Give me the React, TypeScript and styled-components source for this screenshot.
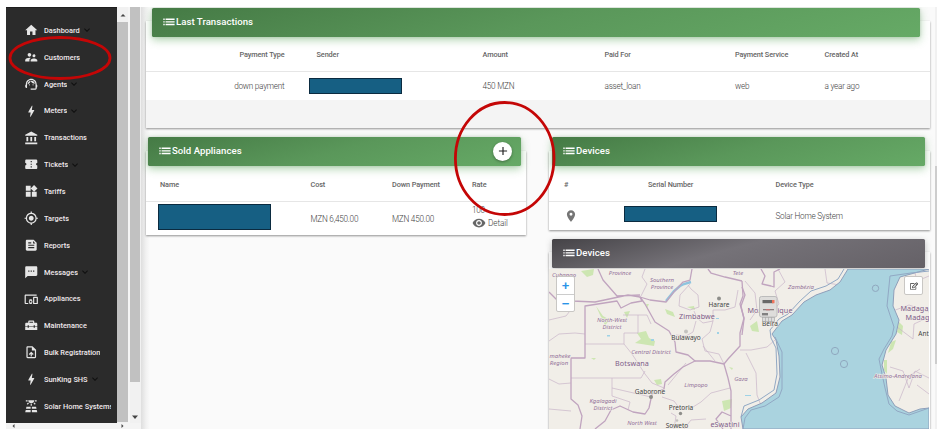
import React from "react";
import styled, { createGlobalStyle } from "styled-components";
import type { IconType } from "react-icons";
import {
  MdHome, MdSupervisorAccount, MdSupportAgent, MdBolt, MdAccountBalance, MdConfirmationNumber,
  MdWidgets, MdGpsFixed, MdFeed, MdTextsms, MdDevicesOther, MdHomeRepairService, MdUploadFile,
  MdSolarPower, MdAdd, MdRemoveRedEye, MdLocationOn, MdKeyboardArrowDown,
} from "react-icons/md";
import { FaRegEdit } from "react-icons/fa";

const GlobalStyle = createGlobalStyle`
  * { box-sizing: border-box; }
  body { margin: 0; background: #fff; font-family: Roboto, "Liberation Sans", sans-serif; }
`;

const Page = styled.div`
  position: relative;
  width: 945px;
  height: 442px;
  padding: 7px 8px 13px 6px;
  overflow: hidden;
  background: #fff;
`;

const Screen = styled.div`
  display: flex;
  height: 422px;
  background: #fafafa;
`;

const SidePane = styled.aside`
  display: flex;
  flex-direction: column;
  width: 135px;
  flex: none;
  background: #f5f5f5;
`;

const SideTop = styled.div`
  display: flex;
  height: 416px;
`;

const Nav = styled.nav`
  width: 111px;
  height: 416px;
  padding-top: 9px;
  background: #2b2b2b;
  border-top: 1px solid #1e1e1e;
  overflow: hidden;
`;

const NavItem = styled.a`
  display: flex;
  align-items: center;
  height: 26.85px;
  padding-left: 17.5px;
  color: #f0e9eb;
  font-size: 7.4px;
  font-weight: 500;
  white-space: nowrap;
`;

const NavLabel = styled.span`
  max-width: 67px;
  overflow: hidden;
`;

const NavIcon = styled.span`
  display: flex;
  width: 20.5px;
  flex: none;
  color: #e6e6e6;
  font-size: 14.5px;
`;

const NavArrow = styled.span`
  display: flex;
  margin-left: 1px;
  color: #101010;
  font-size: 12px;
`;

const InnerScroll = styled.div`
  display: flex;
  flex-direction: column;
  width: 11px;
  margin-right: 2px;
  background: #f1f1f1;
`;

const OuterScroll = styled(InnerScroll)`
  justify-content: space-between;
  width: 11px;
  margin-right: 0;
  padding-right: 1px;
`;

const Thumb = styled.div<{ $height: number }>`
  height: ${(p) => p.$height}px;
  flex: none;
  background: #c1c1c1;
`;

const ScrollButton = styled.div<{ $height: number }>`
  display: flex;
  flex: none;
  align-items: center;
  justify-content: center;
  height: ${(p) => p.$height}px;
`;

const HorizontalScroll = styled.div`
  display: flex;
  justify-content: space-between;
  align-items: center;
  height: 6px;
  padding: 0 15px 0 4px;
  background: #f4f4f4;
`;

const Main = styled.main`
  width: 794px;
  flex: none;
  padding: 14px 0 0 5px;
  background: linear-gradient(90deg, #dedede, #f1f1f1 5px, #fafafa 9px);
  overflow: hidden;
`;

const Card = styled.section<{ $height: number }>`
  height: ${(p) => p.$height}px;
  background: #fff;
  box-shadow: 0 1px 2px rgba(0, 0, 0, 0.42);
`;

const TransactionsCard = styled(Card)`
  width: 784px;
  background: linear-gradient(#fff 79px, #f4f4f4 79px);
`;

const CardHeader = styled.header<{ $tone?: "green" | "gray"; $left: number; $right: number; $rise: number }>`
  position: relative;
  top: -${(p) => p.$rise}px;
  display: flex;
  align-items: center;
  height: 29px;
  margin: 0 ${(p) => p.$right}px -${(p) => p.$rise}px ${(p) => p.$left}px;
  padding: 0 9px 1px 11px;
  border-radius: 1.5px;
  color: #fff;
  font-size: 9.6px;
  font-weight: 500;
  background: ${(p) =>
    p.$tone === "gray"
      ? "linear-gradient(165deg, #454347, #757278 45%, #656167)"
      : "linear-gradient(165deg, #457a45, #5a975a 50%, #66aa66)"};
  box-shadow: ${(p) =>
    p.$tone === "gray"
      ? "0 2px 6px rgba(70, 70, 70, 0.35)"
      : "0 3px 8px rgba(80, 160, 80, 0.45), 0 0 3px rgba(0, 0, 0, 0.15)"};
`;

const HeaderTitle = styled.span`
  flex: 1;
  padding-bottom: 1px;
  white-space: nowrap;
  letter-spacing: 0.04px;
`;

const ListGlyph = styled.span`
  display: flex;
  width: 13px;
`;

const AddButton = styled.button`
  display: flex;
  align-items: center;
  justify-content: center;
  width: 19px;
  height: 19px;
  padding: 0;
  border: 0;
  border-radius: 50%;
  background: #fff;
  color: #222;
  font-size: 14px;
  box-shadow: 0 1px 3px rgba(0, 0, 0, 0.35);
`;

const TableRow = styled.div<{ $columns: string; $height: number; $left?: number }>`
  display: grid;
  grid-template-columns: ${(p) => p.$columns};
  align-items: center;
  height: ${(p) => p.$height}px;
  padding-left: ${(p) => p.$left ?? 0}px;
  background: #fff;
  color: #424242;
  font-size: 8.2px;
  font-weight: 300;
  letter-spacing: -0.24px;
  white-space: nowrap;
`;

const TableHead = styled(TableRow)`
  padding-top: 1px;
  color: #666;
  font-size: 7.3px;
  font-weight: 500;
  letter-spacing: -0.1px;
  border-bottom: 1px solid #e6e6e6;
`;

const EndCell = styled.span`
  padding-right: 32px;
  text-align: right;
`;

const Redacted = styled.span<{ $width: number; $height: number; $shift: number; $lift: number }>`
  width: ${(p) => p.$width}px;
  height: ${(p) => p.$height}px;
  margin-left: ${(p) => p.$shift}px;
  margin-bottom: ${(p) => p.$lift}px;
  border: 1px solid #0b2b40;
  background: #165f83;
`;

const RateCell = styled.div`
  display: flex;
  flex-direction: column;
  margin-top: -3px;
  line-height: 12px;
`;

const DetailLink = styled.span`
  display: flex;
  align-items: center;
  gap: 2px;
  letter-spacing: -0.1px;
`;

const DetailIcon = styled.span`
  display: flex;
  color: #666;
  font-size: 14px;
`;

const PinIcon = styled(DetailIcon)`
  color: #757575;
`;

const LowerArea = styled.div`
  display: grid;
  grid-template-columns: 380px 381px;
  column-gap: 23px;
  align-items: start;
  margin-top: 23px;
`;

const RightColumn = styled.div`
  display: flex;
  flex-direction: column;
  gap: 22px;
`;

const MapFrame = styled.div`
  position: relative;
  width: 380px;
  height: 160px;
  margin-top: 1px;
  overflow: hidden;
  font-family: "Noto Sans", sans-serif;
`;

const ZoomControl = styled.div`
  position: absolute;
  left: 7px;
  top: 7px;
  width: 19px;
  border: 1px solid #c9c7c4;
  border-radius: 2px;
  background: #fff;
`;

const ZoomButton = styled.div`
  display: flex;
  align-items: center;
  justify-content: center;
  height: 17px;
  color: #2a93e8;
  font: 700 13px/17px "Liberation Sans", sans-serif;
  & + & { border-top: 1px solid #ccc; }
`;

const EditControl = styled.div`
  position: absolute;
  right: 6px;
  top: 7px;
  display: flex;
  align-items: center;
  justify-content: center;
  width: 19px;
  height: 19px;
  border: 1px solid #c9c7c4;
  border-radius: 2px;
  background: #fff;
  color: #333;
  font-size: 8px;
`;

const PageScroll = styled.div`
  width: 2px;
  padding-top: 29px;
  background: #f1f1f1;
`;

const PageThumb = styled.div`
  height: 328px;
  background: linear-gradient(#f1f1f1 130px, #cdcdcd 130px);
`;

const Annotations = styled.svg`
  position: absolute;
  left: 0;
  top: 0;
  pointer-events: none;
`;

const navItems: { label: string; icon: IconType; open?: boolean }[] = [
  { label: "Dashboard", icon: MdHome, open: true },
  { label: "Customers", icon: MdSupervisorAccount },
  { label: "Agents", icon: MdSupportAgent, open: true },
  { label: "Meters", icon: MdBolt, open: true },
  { label: "Transactions", icon: MdAccountBalance },
  { label: "Tickets", icon: MdConfirmationNumber, open: true },
  { label: "Tariffs", icon: MdWidgets },
  { label: "Targets", icon: MdGpsFixed },
  { label: "Reports", icon: MdFeed },
  { label: "Messages", icon: MdTextsms, open: true },
  { label: "Appliances", icon: MdDevicesOther },
  { label: "Maintenance", icon: MdHomeRepairService },
  { label: "Bulk Registration", icon: MdUploadFile },
  { label: "SunKing SHS", icon: MdBolt, open: true },
  { label: "Solar Home Systems", icon: MdSolarPower },
];

const TX_COLUMNS = "170.5px 166px 122px 130.5px 89.5px 1fr";
const SOLD_COLUMNS = "150.5px 81.5px 80px 1fr";
const DEVICE_COLUMNS = "84px 127.5px 1fr";

const Arrow = ({ d }: { d: string }) => (
  <svg width="6" height="6" viewBox="0 0 6 6"><path d={d} fill="#444" /></svg>
);

const ListIcon = () => (
  <svg width="12" height="8" viewBox="0 0 12 8" fill="#fff">
    <path d="M0.3 0.6h1.4v1.4H0.3zM0.3 3.2h1.4v1.4H0.3zM0.3 5.8h1.4v1.4H0.3zM2.6 0.6h9v1.4h-9zM2.6 3.2h9v1.4h-9zM2.6 5.8h9v1.4h-9z" />
  </svg>
);

/* Southern Africa; the map's own coordinates start at 549, 269. */
const borders = [
  "M598 269 L603 280 L617 296 L640 295 M549 292 L556 299 L572 301 L595 302 L628 295 L640 297 L642 301 L631 303 L621 308 L617 301 L585 306 L585 358 L571 358 L571 399 L578 405 L582 416 L580 429",
  "M640 297 L645 304 L655 322 L669 331 L675 342 L676 352 L688 355 L695 361 L683 367 L674 374 L665 382 L664 389 L652 394 L649 408 L645 414 L633 412 L620 406 L611 410 L605 421 L595 429",
  "M640 297 L650 300 L666 302 L673 293 L683 282 L690 280 L692 269",
  "M708 269 L711 273 L725 277 L742 281 M742 281 L743 296 L740 304 L744 318 L740 333 L740 346 L728 359 L724 364 L710 361 L695 361",
  "M724 364 L728 378 L731 391 L731 429 M731 416 L722 412 L716 419 L723 429",
  "M742 287 L745 295 L741 306 L744 319 L742 335",
  "M761 269 L765 276 L762 284 L771 286 L774 287 L774 272 L780 269",
];
const provinces = [
  "M645 269 L642 277 L647 284 L641 296 M690 284 L680 295 L679 306 L690 310 L699 307 L698 295 L691 289 L688 285",
  "M694 311 L697 318 L703 323 L713 321 L713 310 L725 310 L735 307 L738 290 M713 321 L710 332 L702 339 L705 351 L719 354 L724 364",
  "M696 321 L693 332 L686 336 L676 335 M703 346 L715 361 M623 315 L647 315 L651 324 M638 315 L638 333 L624 333 L624 344 L585 344 M624 344 L632 354 L645 374 L652 383 L664 388",
  "M571 378 L641 378 L645 371 M612 378 L612 396 L630 402 L628 410 M612 388 L651 397 M668 385 L686 363 M662 397 L674 401 L680 409 L693 407 L701 402 L711 393 L730 388",
  "M549 341 L559 334 L575 333 L585 334 M549 320 L566 316 L573 307 M549 379 L559 384 L571 383 M549 409 L571 411",
  "M674 429 L676 416 L671 413 M684 429 L691 420 L706 419 M740 350 L751 350 L767 347 L775 340 M746 353 L756 373 L757 395 L762 408",
  "M745 281 L755 293 L757 310 L750 320 M778 269 L785 282 L775 291 L779 304 L770 314 M825 269 L827 283 L840 285",
  "M914 269 L917 281 L929 276 M890 312 L909 305 L929 312 M897 327 L913 339 L914 324 L929 317 M890 367 L903 371 L909 388 L915 371 L929 378 M899 401 L909 376 L920 369 M917 385 L929 394",
];
const coast =
  "M848 269 L840 282 L830 290 L816 295 L804 302 L792 315 L782 321 L772 334 L776 340 L779 356 L780 377 L776 393 L762 403 L748 409 L741 417 L743 429 L929 429 L929 408 L920 409 L909 413 L895 406 L888 395 L886 378 L882 365 L886 350 L896 334 L899 320 L893 306 L894 290 L900 277 L929 269 Z";

const provinceLabels: [number, number, string][] = [
  [564, 277, "Cubango"], [620, 275, "Province"], [662, 282, "Southern"], [662, 289, "Province"],
  [612, 322, "North-West"], [612, 329, "District"], [651, 354, "Central District"], [560, 358, "maheke"],
  [559, 365, "Region"], [603, 403, "Kgalagadi"], [603, 410, "District"], [642, 425, "North West"],
  [696, 387, "Limpopo"], [741, 381, "Gaza"], [801, 289, "Zambézia"], [738, 275, "Tete"], [898, 378, "Atsimo-Andrefana"],
];
const countryLabels: [number, number, string][] = [
  [697, 319, "Zimbabwe"], [632, 366, "Botswana"], [770, 313, "Mozambique"], [914.5, 311, "Madaga"],
  [917.5, 320, "Madag"], [725, 427, "eSwatini"],
];
const cityLabels: [number, number, string][] = [
  [719, 307, "Harare"], [686, 340, "Bulawayo"], [650, 394, "Gaborone"], [681, 410, "Pretoria"],
  [677, 427.5, "Soweto"], [770, 325.5, "Beira"], [923.5, 335.5, "Ant"],
];

const AfricaMap = () => (
  <svg width="380" height="160" viewBox="549 269 380 160">
    <rect x="549" y="269" width="380" height="160" fill="#f1eee8" />
    <g fill="#cde6b2">
      <path d="M581 271 L594 269 L593 275 L587 277 Z M596 306 L603 316 L610 320 L605 325 L600 315 Z M637 333 L646 331 L649 338 L655 341 L654 346 L635 343 L641 339 Z M654 380 L661 379 L662 384 L657 385 Z M722 401 L732 399 L731 408 L724 411 Z M750 326 L757 321 L759 332 L752 331 Z M899 322 L903 326 L902 335 L897 332 Z M884 360 L887 360 L887 374 L884 370 Z M665 309 L673 312 L675 317 L667 314 Z M687 307 L694 306 L695 310 Z M891 342 L896 340 L893 349 L888 353 Z M624 312 L630 311 L627 318 Z M646 304 L649 304 L647 308 Z M591 358 L596 358 L594 360 Z M729 367 L733 368 L732 370 Z" />
    </g>
    <path d="M666 301 L674 291 L680 286 L684 284 L691 282" fill="none" stroke="#8ec4df" strokeWidth="2.4" />
    <g fill="#9fd2e6"><rect x="607" y="335" width="3" height="1.5" /><rect x="651" y="339" width="3" height="2" /><rect x="717" y="332" width="2" height="2" /><rect x="745" y="395" width="6" height="1" /><rect x="716" y="318" width="3" height="1" /></g>
    <g fill="none" stroke="#c9b5c9" strokeWidth="0.7" strokeLinejoin="round">{provinces.map((d) => <path key={d} d={d} />)}</g>
    <g fill="none" stroke="#c0a4bf" strokeWidth="1.3" strokeLinejoin="round">{borders.map((d) => <path key={d} d={d} />)}</g>
    <path d={coast} fill="#aad3df" stroke="#8f9fba" strokeWidth="1" />
    <path d="M844 269 L838 279 L826 286 L811 291 L800 301 L788 314 L779 319 L770 330 L771 338 L776 348 L777 374 L774 390 L759 400 L744 406 L741 417" fill="none" stroke="#91a8c4" strokeWidth="1" />
    <path d="M929 271 L911 273 L890 276 L887 306 L894 327 L892 336 L884 349 L879 359 L882 374 L885 388 L889 404 L897 411 L909 415 L929 408" fill="none" stroke="#91a8c4" strokeWidth="1" />
    <path d="M743 429 L745 418 L751 410 L765 406 L779 397 L782 389 L782 352 L775 337" fill="none" stroke="#91a8c4" strokeWidth="1" />
    <g fill="none" stroke="#90a8bf" strokeWidth="1"><circle cx="875.5" cy="288.3" r="3.2" /><circle cx="835" cy="351" r="3.6" /><circle cx="844" cy="364" r="3.6" /></g>
    <g fill="#8e8e8a"><circle cx="719" cy="298.5" r="2" /><circle cx="651" cy="397" r="2" /><circle cx="680.5" cy="413.5" r="1.7" /></g>
    <g fill="#c4c2bf"><circle cx="686" cy="331.5" r="2" /><circle cx="677" cy="420.5" r="1.3" /></g>
    <g textAnchor="middle" stroke="#f1eee8" strokeWidth="1.2" paintOrder="stroke">
      <g fill="#94729a" fontSize="6" fontStyle="italic">{provinceLabels.map(([x, y, t]) => <text key={`${t}${x}`} x={x} y={y}>{t}</text>)}</g>
      <g fill="#7e5c89" fontSize="7.2" letterSpacing="0.1">{countryLabels.map(([x, y, t]) => <text key={t} x={x} y={y}>{t}</text>)}</g>
      <g fill="#444" fontSize="6.5">{cityLabels.map(([x, y, t]) => <text key={t} x={x} y={y}>{t}</text>)}</g>
    </g>
    <g>
      <rect x="759.5" y="296.5" width="17.5" height="20.5" rx="2" fill="#dedddb" stroke="#bcbcbc" />
      <rect x="762.5" y="300" width="11" height="3.2" fill="#686868" /><rect x="772" y="300" width="2.5" height="3.2" fill="#ef755c" />
      <rect x="763" y="309" width="11" height="1.3" fill="#8c8080" /><rect x="766" y="309" width="4" height="1.3" fill="#c57575" />
      <rect x="762" y="313" width="6" height="2.4" fill="#808080" />
      <rect x="762.5" y="317.5" width="12" height="4" fill="#ddd" stroke="#aaa" strokeWidth="0.7" />
      <path d="M765.5 317v5M768.5 317v5M771.5 317v5" stroke="#aaa" strokeWidth="0.7" />
    </g>
  </svg>
);

export default function App() {
  return (
    <Page>
      <GlobalStyle />
      <Screen>
        <SidePane>
          <SideTop>
            <Nav>
              {navItems.map(({ label, icon: Icon, open }) => (
                <NavItem key={label}>
                  <NavIcon><Icon /></NavIcon>
                  <NavLabel>{label}</NavLabel>
                  {open && <NavArrow><MdKeyboardArrowDown /></NavArrow>}
                </NavItem>
              ))}
            </Nav>
            <InnerScroll>
              <ScrollButton $height={15}><Arrow d="M0.5 4.5L3 2L5.5 4.5Z" /></ScrollButton>
              <Thumb $height={400} />
            </InnerScroll>
            <OuterScroll>
              <Thumb $height={375} />
              <ScrollButton $height={13}><Arrow d="M0 1.5L3 5L6 1.5Z" /></ScrollButton>
            </OuterScroll>
          </SideTop>
          <HorizontalScroll>
            <Arrow d="M4.5 1L2.5 3L4.5 5Z" />
            <Arrow d="M1.5 1L3.5 3L1.5 5Z" />
          </HorizontalScroll>
        </SidePane>

        <Main>
          <TransactionsCard $height={107}>
            <CardHeader $left={6} $right={10} $rise={13}>
              <ListGlyph><ListIcon /></ListGlyph>
              <HeaderTitle>Last Transactions</HeaderTitle>
            </CardHeader>
            <TableHead $columns={TX_COLUMNS} $height={35}>
              <EndCell>Payment Type</EndCell>
              <span>Sender</span><span>Amount</span><span>Paid For</span><span>Payment Service</span><span>Created At</span>
            </TableHead>
            <TableRow $columns={TX_COLUMNS} $height={28}>
              <EndCell>down payment</EndCell>
              <Redacted $width={93} $height={16} $shift={-7.5} $lift={1} />
              <span>450 MZN</span><span>asset_loan</span><span>web</span><span>a year ago</span>
            </TableRow>
          </TransactionsCard>

          <LowerArea>
            <Card $height={84}>
              <CardHeader $left={2} $right={5} $rise={14}>
                <ListGlyph><ListIcon /></ListGlyph>
                <HeaderTitle>Sold Appliances</HeaderTitle>
                <AddButton aria-label="Add appliance"><MdAdd /></AddButton>
              </CardHeader>
              <TableHead $columns={SOLD_COLUMNS} $height={36} $left={14}>
                <span>Name</span><span>Cost</span><span>Down Payment</span><span>Rate</span>
              </TableHead>
              <TableRow $columns={SOLD_COLUMNS} $height={33} $left={14}>
                <Redacted $width={113} $height={26} $shift={-2} $lift={4} />
                <span>MZN 6,450.00</span>
                <span>MZN 450.00</span>
                <RateCell>
                  <span>100</span>
                  <DetailLink><DetailIcon><MdRemoveRedEye /></DetailIcon>Detail</DetailLink>
                </RateCell>
              </TableRow>
            </Card>

            <RightColumn>
              <Card $height={79}>
                <CardHeader $left={3} $right={5} $rise={14}>
                  <ListGlyph><ListIcon /></ListGlyph>
                  <HeaderTitle>Devices</HeaderTitle>
                </CardHeader>
                <TableHead $columns={DEVICE_COLUMNS} $height={36} $left={15}>
                  <span>#</span><span>Serial Number</span><span>Device Type</span>
                </TableHead>
                <TableRow $columns={DEVICE_COLUMNS} $height={28} $left={15}>
                  <PinIcon><MdLocationOn /></PinIcon>
                  <Redacted $width={93} $height={16} $shift={-24.5} $lift={5} />
                  <span>Solar Home System</span>
                </TableRow>
              </Card>

              <Card $height={180}>
                <CardHeader $tone="gray" $left={3} $right={5} $rise={13}>
                  <ListGlyph><ListIcon /></ListGlyph>
                  <HeaderTitle>Devices</HeaderTitle>
                </CardHeader>
                <MapFrame>
                  <AfricaMap />
                  <ZoomControl>
                    <ZoomButton>+</ZoomButton>
                    <ZoomButton>−</ZoomButton>
                  </ZoomControl>
                  <EditControl><FaRegEdit /></EditControl>
                </MapFrame>
              </Card>
            </RightColumn>
          </LowerArea>
        </Main>
        <PageScroll><PageThumb /></PageScroll>
      </Screen>
      <Annotations width="945" height="442" viewBox="0 0 945 442" fill="none" stroke="#c40606">
        <ellipse cx="60" cy="58" rx="50" ry="20.5" strokeWidth="2.8" />
        <ellipse cx="504.7" cy="158.5" rx="49.3" ry="56" strokeWidth="2.8" />
      </Annotations>
    </Page>
  );
}
